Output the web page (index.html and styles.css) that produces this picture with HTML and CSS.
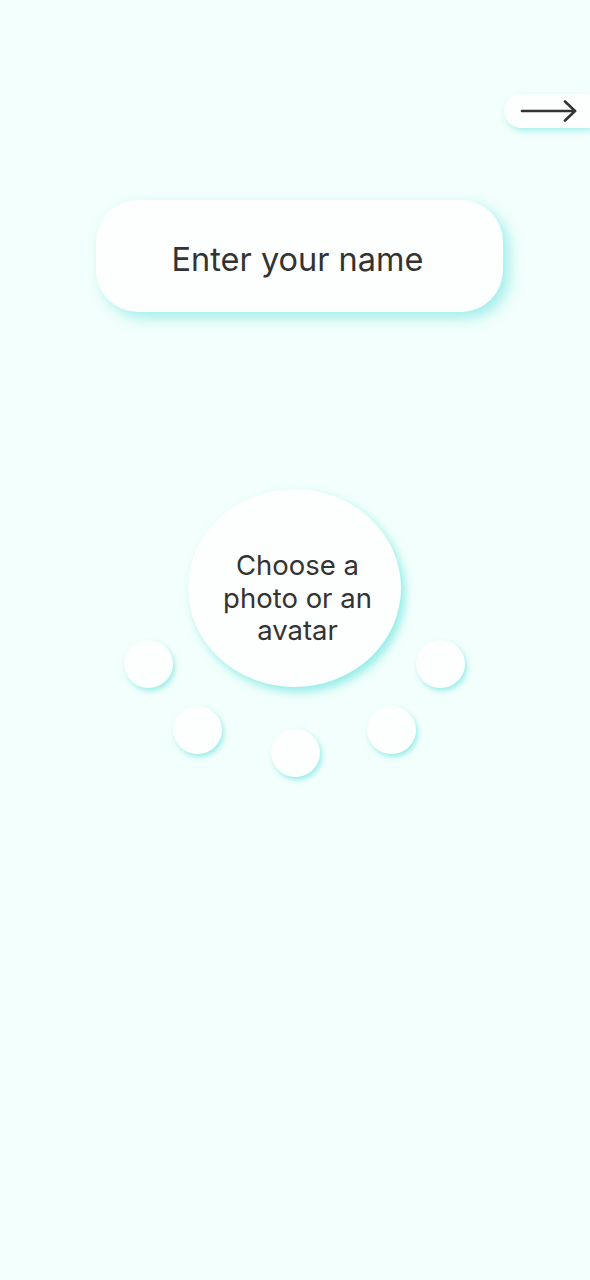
FILE: index.html
```html
<!DOCTYPE html>
<html lang="en">
<head>
<meta charset="utf-8">
<title>Profile</title>
<link rel="stylesheet" href="styles.css">
</head>
<body>
<div class="screen">
  <div class="topbar">
    <button class="next" aria-label="Next">
      <svg width="58" height="22" viewBox="0 0 58 22" fill="none" stroke="#333333" stroke-width="2.6" stroke-linecap="round" stroke-linejoin="round">
        <path d="M2 11H55"/>
        <path d="M45 1.5L55 11L45 20.5"/>
      </svg>
    </button>
  </div>
  <div class="name-row">
    <div class="name-box">Enter your name</div>
  </div>
  <div class="avatar-area">
    <div class="photo">Choose a<br>photo or an<br>avatar</div>
    <span class="dot d1"></span>
    <span class="dot d2"></span>
    <span class="dot d3"></span>
    <span class="dot d4"></span>
    <span class="dot d5"></span>
  </div>
</div>
</body>
</html>
```
FILE: styles.css
```css
html, body {
  margin: 0;
  padding: 0;
}
body {
  background: #f3fffc;
  font-family: Inter, "Noto Sans", sans-serif;
  color: #333333;
}
.screen {
  width: 590px;
  min-height: 1280px;
  display: flex;
  flex-direction: column;
}
.topbar {
  display: flex;
  justify-content: flex-end;
  padding-top: 94px;
}
.next {
  width: 86px;
  height: 34px;
  border: none;
  padding: 0 0 0 16px;
  background: #fdfffe;
  border-radius: 17px 0 0 17px;
  box-shadow: 2px 3px 6px rgba(70, 220, 215, 0.45);
  display: flex;
  align-items: center;
  cursor: pointer;
}
.next svg {
  display: block;
}
.name-row {
  padding: 72px 0 0 96px;
  display: flex;
}
.name-box {
  box-sizing: border-box;
  width: 407px;
  height: 112px;
  padding: 6px 4px 0 0;
  border-radius: 42px;
  background: #fdfffe;
  box-shadow: 6px 6px 14px rgba(80, 222, 218, 0.5);
  display: flex;
  align-items: center;
  justify-content: center;
  font-size: 32.5px;
  color: #333333;
}
.avatar-area {
  position: relative;
  height: 480px;
  margin-top: 177px;
}
.photo {
  box-sizing: border-box;
  position: absolute;
  left: 188px;
  top: 0;
  width: 213px;
  height: 198px;
  padding: 20px 0 0 6px;
  border-radius: 50%;
  background: #fdfffe;
  box-shadow: 4px 5px 10px rgba(70, 220, 215, 0.55);
  display: flex;
  align-items: center;
  justify-content: center;
  text-align: center;
  font-size: 27.5px;
  line-height: 32.5px;
  color: #333333;
}
.dot {
  position: absolute;
  width: 49px;
  height: 48px;
  border-radius: 50%;
  background: #fdfffe;
  box-shadow: 2px 3px 5px rgba(70, 220, 215, 0.5);
}
.d1 { left: 124px; top: 151px; }
.d2 { left: 173px; top: 217px; }
.d3 { left: 271px; top: 240px; }
.d4 { left: 367px; top: 217px; }
.d5 { left: 416px; top: 151px; }
```
